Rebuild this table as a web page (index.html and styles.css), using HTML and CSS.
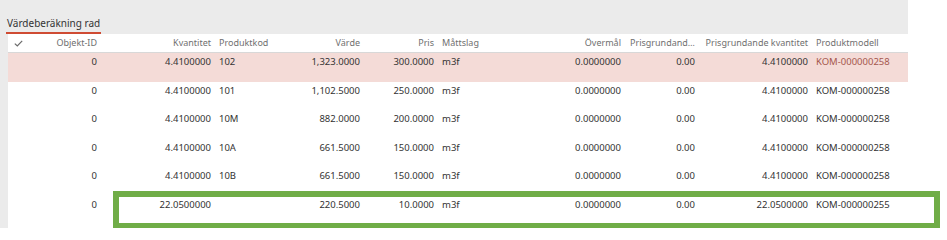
FILE: index.html
```html
<!DOCTYPE html>
<html lang="sv">
<head>
<meta charset="utf-8">
<title>Värdeberäkning rad</title>
<link rel="stylesheet" href="styles.css">
</head>
<body>
<div class="panel">
  <div class="tabbar"><span class="tab">Värdeberäkning rad</span></div>
  <div class="grid">
    <div class="row head">
      <div class="c chk"><svg width="9" height="7" viewBox="0 0 9 7"><path d="M0.8 3.6 L3.3 6 L8.2 0.8" fill="none" stroke="#6a6a6a" stroke-width="1.2"/></svg></div>
      <div class="c r">Objekt-ID</div>
      <div class="c r">Kvantitet</div>
      <div class="c">Produktkod</div>
      <div class="c r">Värde</div>
      <div class="c r">Pris</div>
      <div class="c">Måttslag</div>
      <div class="c r">Övermål</div>
      <div class="c ell">Prisgrundande enhet</div>
      <div class="c r">Prisgrundande kvantitet</div>
      <div class="c">Produktmodell</div>
    </div>
    <div class="row sel">
      <div class="c chk"></div>
      <div class="c r">0</div>
      <div class="c r">4.4100000</div>
      <div class="c">102</div>
      <div class="c r">1,323.0000</div>
      <div class="c r">300.0000</div>
      <div class="c">m3f</div>
      <div class="c r">0.0000000</div>
      <div class="c r">0.00</div>
      <div class="c r">4.4100000</div>
      <div class="c model">KOM-000000258</div>
    </div>
    <div class="row">
      <div class="c chk"></div>
      <div class="c r">0</div>
      <div class="c r">4.4100000</div>
      <div class="c">101</div>
      <div class="c r">1,102.5000</div>
      <div class="c r">250.0000</div>
      <div class="c">m3f</div>
      <div class="c r">0.0000000</div>
      <div class="c r">0.00</div>
      <div class="c r">4.4100000</div>
      <div class="c model">KOM-000000258</div>
    </div>
    <div class="row">
      <div class="c chk"></div>
      <div class="c r">0</div>
      <div class="c r">4.4100000</div>
      <div class="c">10M</div>
      <div class="c r">882.0000</div>
      <div class="c r">200.0000</div>
      <div class="c">m3f</div>
      <div class="c r">0.0000000</div>
      <div class="c r">0.00</div>
      <div class="c r">4.4100000</div>
      <div class="c model">KOM-000000258</div>
    </div>
    <div class="row">
      <div class="c chk"></div>
      <div class="c r">0</div>
      <div class="c r">4.4100000</div>
      <div class="c">10A</div>
      <div class="c r">661.5000</div>
      <div class="c r">150.0000</div>
      <div class="c">m3f</div>
      <div class="c r">0.0000000</div>
      <div class="c r">0.00</div>
      <div class="c r">4.4100000</div>
      <div class="c model">KOM-000000258</div>
    </div>
    <div class="row">
      <div class="c chk"></div>
      <div class="c r">0</div>
      <div class="c r">4.4100000</div>
      <div class="c">10B</div>
      <div class="c r">661.5000</div>
      <div class="c r">150.0000</div>
      <div class="c">m3f</div>
      <div class="c r">0.0000000</div>
      <div class="c r">0.00</div>
      <div class="c r">4.4100000</div>
      <div class="c model">KOM-000000258</div>
    </div>
    <div class="row">
      <div class="c chk"></div>
      <div class="c r">0</div>
      <div class="c r">22.0500000</div>
      <div class="c"></div>
      <div class="c r">220.5000</div>
      <div class="c r">10.0000</div>
      <div class="c">m3f</div>
      <div class="c r">0.0000000</div>
      <div class="c r">0.00</div>
      <div class="c r">22.0500000</div>
      <div class="c model">KOM-000000255</div>
    </div>
  </div>
  <div class="highlight"></div>
</div>
</body>
</html>
```
FILE: styles.css
```css
html, body {
  margin: 0;
  padding: 0;
  background: #ffffff;
}
body {
  font-family: "Noto Sans", "Open Sans", sans-serif;
  color: #333333;
}
.panel {
  position: relative;
  width: 908px;
  height: 228px;
  background: #ebebeb;
  box-sizing: border-box;
  padding-left: 8px;
}
.tabbar {
  height: 34px;
  box-sizing: border-box;
  padding-top: 10px;
}
.tab {
  display: inline-block;
  margin-left: -2px;
  padding: 0 1px 2px 1px;
  font-size: 10px;
  line-height: 14px;
  color: #333333;
  border-bottom: 2px solid #cf4b33;
}
.grid {
  background: #ffffff;
  height: 194px;
}
.row {
  display: grid;
  grid-template-columns: 32px 61px 114px 70px 79px 74px 82px 105px 74px 113px 96px;
  height: 28.6px;
  box-sizing: border-box;
  padding-top: 2px;
  font-size: 9.5px;
  line-height: 14px;
}
.row.head {
  height: 19px;
  font-size: 9px;
  color: #707070;
  border-bottom: 1px solid #d8d8d8;
}
.row.sel {
  background: #f4dbd7;
}
.c {
  padding: 0 4px;
  white-space: nowrap;
  overflow: hidden;
}
.c.r {
  text-align: right;
}
.c.ell {
  text-overflow: ellipsis;
  padding-left: 5px;
}
.c.chk {
  padding-left: 6px;
}
.c.chk svg {
  display: block;
  margin-top: 4px;
}
.row.sel .model {
  color: #a5574d;
}
.highlight {
  position: absolute;
  left: 113px;
  top: 191px;
  width: 827px;
  height: 38px;
  box-sizing: border-box;
  border: 6px solid #70ad47;
}
```
